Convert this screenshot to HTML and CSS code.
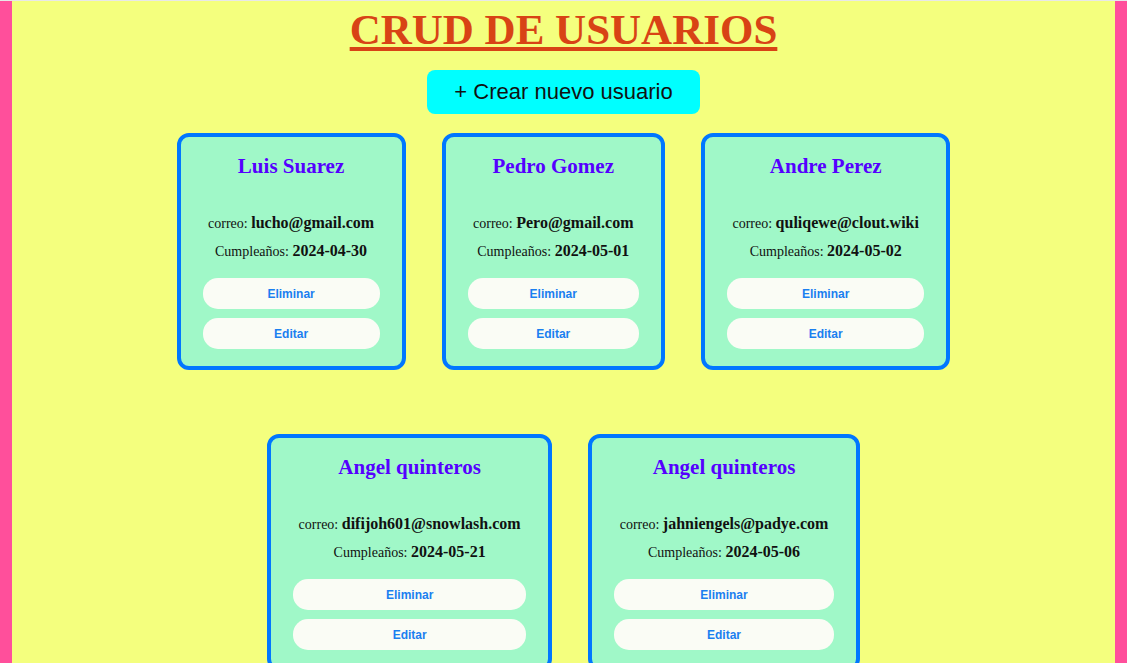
FILE: index.html
```html
<!DOCTYPE html>
<html lang="es">
<head>
<meta charset="utf-8">
<title>CRUD de usuarios</title>
<link rel="stylesheet" href="styles.css">
</head>
<body>
<main class="page">
  <h1 class="title">CRUD DE USUARIOS</h1>
  <div class="actions">
    <button class="create-btn">+ Crear nuevo usuario</button>
  </div>
  <section class="cards">
    <article class="card">
      <h3 class="card-name">Luis Suarez</h3>
      <p class="card-info">correo: <b>lucho@gmail.com</b></p>
      <p class="card-info second">Cumpleaños: <b>2024-04-30</b></p>
      <button class="card-btn">Eliminar</button>
      <button class="card-btn">Editar</button>
    </article>
    <article class="card">
      <h3 class="card-name">Pedro Gomez</h3>
      <p class="card-info">correo: <b>Pero@gmail.com</b></p>
      <p class="card-info second">Cumpleaños: <b>2024-05-01</b></p>
      <button class="card-btn">Eliminar</button>
      <button class="card-btn">Editar</button>
    </article>
    <article class="card">
      <h3 class="card-name">Andre Perez</h3>
      <p class="card-info">correo: <b>quliqewe@clout.wiki</b></p>
      <p class="card-info second">Cumpleaños: <b>2024-05-02</b></p>
      <button class="card-btn">Eliminar</button>
      <button class="card-btn">Editar</button>
    </article>
    <article class="card">
      <h3 class="card-name">Angel quinteros</h3>
      <p class="card-info">correo: <b>difijoh601@snowlash.com</b></p>
      <p class="card-info second">Cumpleaños: <b>2024-05-21</b></p>
      <button class="card-btn">Eliminar</button>
      <button class="card-btn">Editar</button>
    </article>
    <article class="card">
      <h3 class="card-name">Angel quinteros</h3>
      <p class="card-info">correo: <b>jahniengels@padye.com</b></p>
      <p class="card-info second">Cumpleaños: <b>2024-05-06</b></p>
      <button class="card-btn">Eliminar</button>
      <button class="card-btn">Editar</button>
    </article>
  </section>
</main>
</body>
</html>
```

FILE: styles.css
```css
html, body {
  margin: 0;
  padding: 0;
}

body {
  background: #ff4f9b;
  border-top: 1px solid #e8e8e8;
  font-family: "Liberation Serif", "Times New Roman", serif;
  min-height: 662px;
}

.page {
  margin: 0 12px;
  background: #f4ff7e;
  min-height: 662px;
  padding-top: 4px;
  display: flex;
  flex-direction: column;
  align-items: center;
}

.title {
  margin: 0;
  font-family: "Liberation Serif", "Times New Roman", serif;
  font-size: 43px;
  font-weight: bold;
  color: #d84315;
  text-decoration: underline;
  line-height: 50px;
}

.actions {
  margin-top: 15px;
}

.create-btn {
  background: #00ffff;
  border: none;
  border-radius: 8px;
  font-family: "Liberation Sans", Arial, sans-serif;
  font-size: 22px;
  color: #111;
  padding: 9px 27px;
  line-height: 26px;
  height: 44px;
}

.cards {
  margin-top: 19px;
  display: flex;
  flex-wrap: wrap;
  justify-content: center;
  row-gap: 64px;
  width: 100%;
}

.card {
  margin: 0 18px;
  background: #a0f8c8;
  border: 4px solid #0077ff;
  border-radius: 12px;
  padding: 0 22px 17px;
  display: flex;
  flex-direction: column;
  align-items: stretch;
  text-align: center;
}

.card-name {
  margin: 17px 0 0;
  font-size: 21px;
  line-height: 24px;
  font-weight: bold;
  color: #5500ff;
}

.card-info {
  margin: 35px 0 0;
  padding: 0 5.5px;
  font-size: 14px;
  line-height: 20px;
  color: #111;
  white-space: nowrap;
}

.card-info b {
  font-size: 16px;
}

.card-info.second {
  margin-top: 7px;
}

.card-btn {
  margin-top: 9px;
  height: 31px;
  background: #fafcf5;
  border: none;
  border-radius: 15px;
  font-family: "Liberation Sans", Arial, sans-serif;
  font-weight: bold;
  font-size: 12px;
  color: #1a7ff0;
}

.card-info.second + .card-btn {
  margin-top: 16px;
}
```
